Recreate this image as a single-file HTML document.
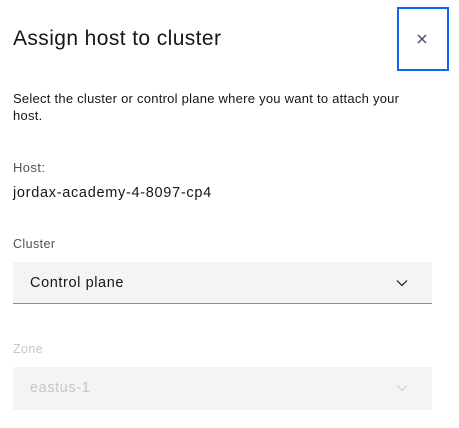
<!DOCTYPE html>
<html><head><style>
*{margin:0;padding:0;box-sizing:border-box}
body{width:459px;height:428px;background:#fff;font-family:"Liberation Sans",sans-serif;color:#161616;position:relative;overflow:hidden}
.a{position:absolute;white-space:nowrap}
</style></head><body>
<div class="a" style="left:13px;top:26px;font-size:21px;line-height:26px;letter-spacing:0.4px">Assign host to cluster</div>
<div class="a" style="left:397px;top:7px;width:52px;height:64px;border:2px solid #0f62fe"></div>
<svg class="a" style="left:416px;top:33px" width="12" height="12" viewBox="0 0 12 12"><path d="M2 2L10 10M10 2L2 10" stroke="#3d4a6b" stroke-width="1.4"/></svg>
<div class="a" style="left:13px;top:90px;font-size:13px;line-height:17px;letter-spacing:0.25px;white-space:normal;width:408px">Select the cluster or control plane where you want to attach your host.</div>
<div class="a" style="left:13px;top:160px;font-size:13px;color:#525252;letter-spacing:0.4px">Host:</div>
<div class="a" style="left:13px;top:185px;font-size:14.5px;letter-spacing:0.7px">jordax-academy-4-8097-cp4</div>
<div class="a" style="left:13px;top:237px;font-size:12.5px;color:#525252;letter-spacing:0.4px">Cluster</div>
<div class="a" style="left:13px;top:262px;width:419px;height:42px;background:#f4f4f4;border-bottom:1px solid #8d8d8d"></div>
<div class="a" style="left:30px;top:275px;font-size:14.5px;letter-spacing:0.6px">Control plane</div>
<svg class="a" style="left:396px;top:279px" width="12" height="8" viewBox="0 0 12 8"><path d="M1 1.5L6 6.5L11 1.5" fill="none" stroke="#161616" stroke-width="1.2"/></svg>
<div class="a" style="left:13px;top:342px;font-size:12.5px;color:#c6c6c6;letter-spacing:0.4px">Zone</div>
<div class="a" style="left:13px;top:367px;width:419px;height:43px;background:#f4f4f4"></div>
<div class="a" style="left:30px;top:380px;font-size:14.5px;color:#c6c6c6;letter-spacing:0.6px">eastus-1</div>
<svg class="a" style="left:396px;top:384px" width="12" height="8" viewBox="0 0 12 8"><path d="M1 1.5L6 6.5L11 1.5" fill="none" stroke="#d0d0d0" stroke-width="1.2"/></svg>
</body></html>
